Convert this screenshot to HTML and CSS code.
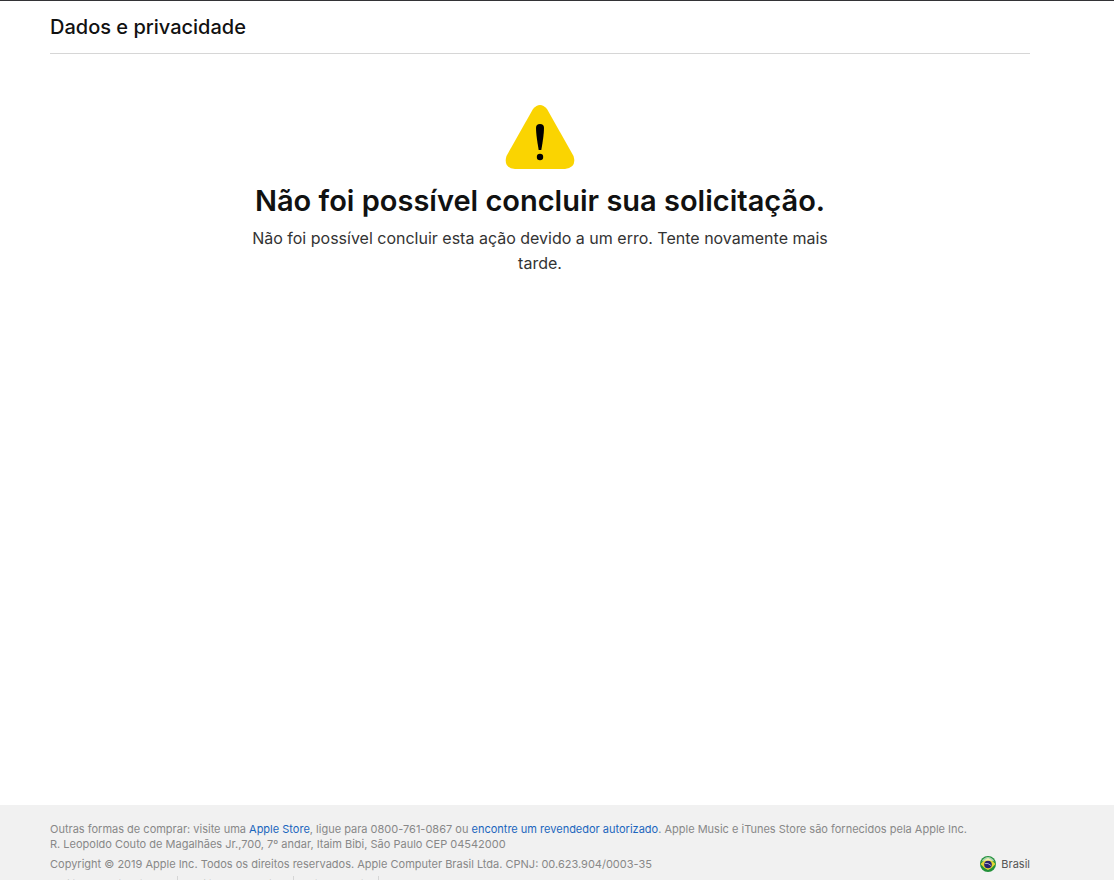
FILE: index.html
```html
<!DOCTYPE html>
<html lang="pt-BR">
<head>
  <meta charset="UTF-8">
  <meta name="viewport" content="width=device-width, initial-scale=1.0">
  <title>Dados e privacidade</title>
  <link rel="stylesheet" href="styles.css">
</head>
<body>
  <header class="header">
    <h2 class="header-title">Dados e privacidade</h2>
  </header>

  <main class="content">
    <svg class="warning-icon" viewBox="0 0 70 64" aria-hidden="true">
      <path fill="#fad401" d="M28 4 Q35 -4 42 4 L68.500 51 Q72 63 60 64 H10 Q-2 63 1.500 51 Z"/>
      <path fill="#000" d="M31 23 Q31 19 35 19 Q39 19 39 23 Q39 30 36.300 45 H33.700 Q31 30 31 23 Z"/>
      <circle cx="35" cy="52" r="3.200" fill="#000"/>
    </svg>
    <h1 class="title">Não foi possível concluir sua solicitação.</h1>
    <p class="message">Não foi possível concluir esta ação devido a um erro. Tente novamente mais tarde.</p>
  </main>

  <footer class="footer">
    <p class="footer-text">
      Outras formas de comprar: visite uma <a href="#">Apple Store</a>, ligue para 0800-761-0867 ou <a href="#">encontre um revendedor autorizado</a>. Apple Music e iTunes Store são fornecidos pela Apple Inc.<br>
      R. Leopoldo Couto de Magalhães Jr.,700, 7º andar, Itaim Bibi, São Paulo CEP 04542000
    </p>
    <div class="footer-row">
      <p class="footer-text">Copyright © 2019 Apple Inc. Todos os direitos reservados. Apple Computer Brasil Ltda. CPNJ: 00.623.904/0003-35</p>
      <a class="country" href="#">
        <svg class="flag" viewBox="0 0 16 16" aria-hidden="true">
          <circle cx="8" cy="8" r="8" fill="#23913a"/>
          <path fill="#e0d535" d="M0.500 8 Q4 3.500 8 2 Q12 3.500 15.500 8 Q12 12.500 8 14 Q4 12.500 0.500 8 Z"/>
          <circle cx="8" cy="8.500" r="3.800" fill="#29236f"/>
          <path d="M4.800 7.500 Q8 6.500 11 9.500" fill="none" stroke="#c5c6df" stroke-width="0.800"/>
          <path fill="#fff" fill-opacity="0.600" d="M1.500 5.500 Q4 1 8 1 Q12 1 14.500 5.500 Q8 3.500 1.500 5.500 Z"/>
        </svg>
        Brasil
      </a>
    </div>
    <ul class="footer-links">
      <li><a href="#">Política de Privacidade</a></li>
      <li><a href="#">Política de cookies</a></li>
      <li><a href="#">Avisos legais</a></li>
    </ul>
  </footer>
</body>
</html>
```
FILE: styles.css
```css
* {
  box-sizing: border-box;
}

body {
  display: flex;
  flex-direction: column;
  height: 100vh;
  margin: 0;
  padding: 0;
  overflow: hidden;
  border-top: 1px solid #333336;
  background-color: #fff;
  color: #111;
  font-family: Inter, "Liberation Sans", sans-serif;
}

h1, h2, p, ul {
  margin: 0;
}

a {
  color: #1b66bd;
  text-decoration: none;
}

a:hover {
  text-decoration: underline;
}

/* header */
.header {
  margin: 0 84px 0 50px;
  padding: 12px 0;
  border-bottom: 1px solid #d6d6d6;
}

.header-title {
  font-size: 20px;
  font-weight: 500;
  line-height: 28px;
}

/* error message */
.content {
  display: flex;
  flex: 1;
  flex-direction: column;
  align-items: center;
  margin: 0 84px 0 50px;
  padding-top: 51px;
  text-align: center;
}

.warning-icon {
  width: 70px;
  height: 64px;
}

.title {
  margin-top: 12px;
  font-size: 29px;
  font-weight: 600;
  line-height: 40px;
}

.message {
  max-width: 600px;
  margin-top: 5px;
  color: #333;
  font-size: 16px;
  font-weight: 400;
  line-height: 25px;
}

/* footer */
.footer {
  height: 75px;
  padding: 17px 84px 0 50px;
  background-color: #f1f1f1;
  color: #888;
  font-size: 11px;
  line-height: 15px;
}

.footer-row {
  display: flex;
  align-items: center;
  justify-content: space-between;
  margin-top: 4px;
}

.country {
  display: flex;
  align-items: center;
  gap: 5px;
  color: #555;
}

.flag {
  width: 16px;
  height: 16px;
}

.footer-links {
  display: flex;
  margin-top: 4px;
  padding: 0;
  list-style: none;
}

.footer-links li {
  margin-right: 8px;
  padding: 2px 9px 0 0;
  border-right: 1px solid #d6d6d6;
}

.footer-links a {
  color: #555;
}
```
